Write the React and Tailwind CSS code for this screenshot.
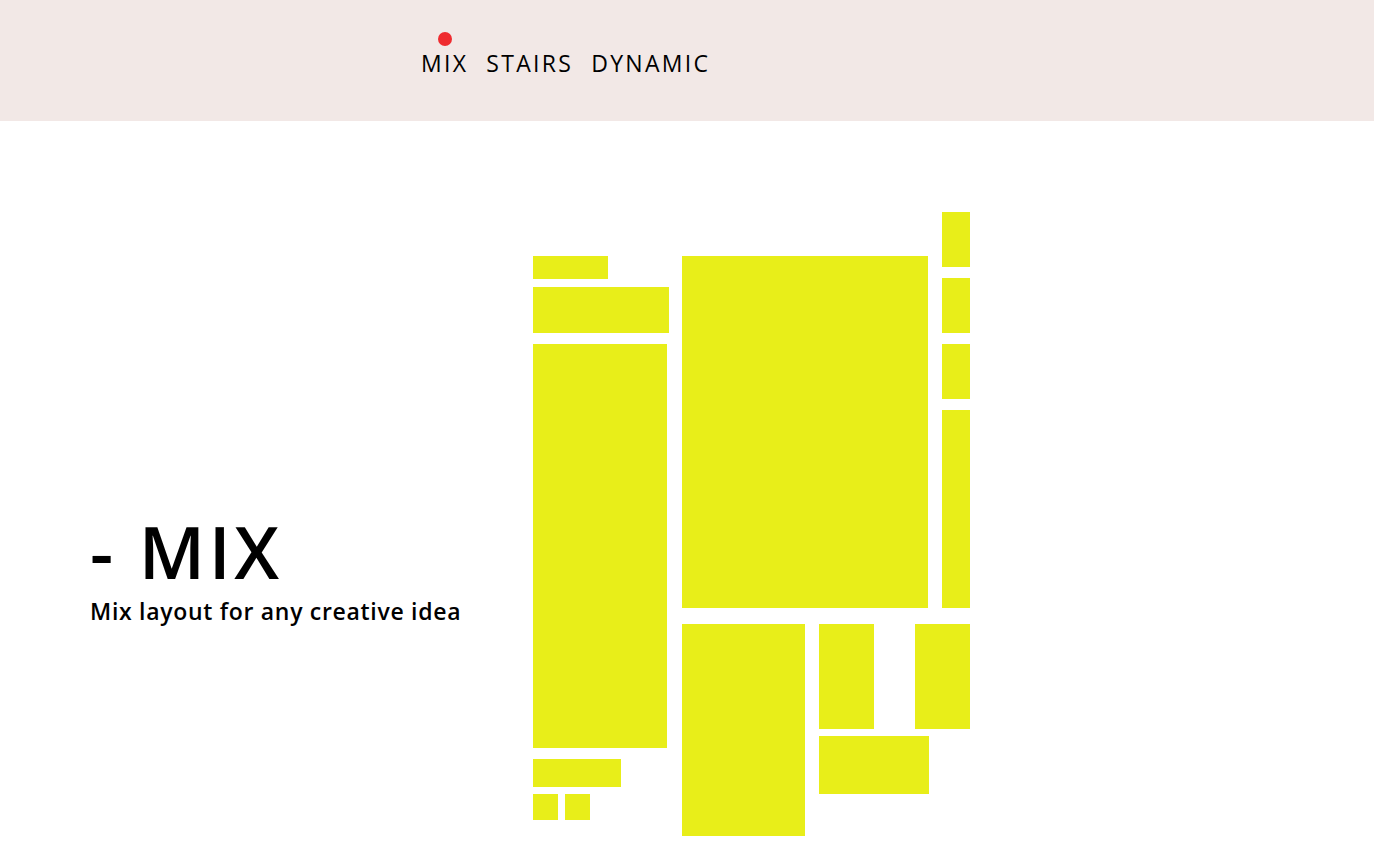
const Y = 'bg-[#e8ee19]';

const NavItem = ({ label, active }) => (
    <div className="relative">
        {active && (
            <span className="absolute left-1/2 -top-[20px] -translate-x-1/2 w-[14px] h-[14px] rounded-full bg-[#ef2b2f]" />
        )}
        <span className="text-[23px] font-normal tracking-[2.3px] text-black">{label}</span>
    </div>
);

export default function App() {
    return (
        <div className="min-h-screen bg-white" style={{ fontFamily: '"Open Sans", "Liberation Sans", sans-serif' }}>
            {/* Header */}
            <header className="h-[121px] bg-[#f2e8e6] flex items-start pl-[421px] pt-[52px]">
                <nav className="flex gap-[18px] leading-none">
                    <NavItem label="MIX" active />
                    <NavItem label="STAIRS" />
                    <NavItem label="DYNAMIC" />
                </nav>
            </header>

            <main className="flex">
                {/* Title */}
                <div className="w-[533px] pl-[90px] pt-[394px] shrink-0">
                    <h1 className="text-[72px] font-semibold leading-none tracking-[3.5px] text-black">- MIX</h1>
                    <p className="mt-[13px] text-[23px] font-semibold leading-none tracking-[0.7px] text-black">Mix layout for any creative idea</p>
                </div>

                {/* Mix grid */}
                <div className="flex gap-[13px] pt-[91px]">
                    <div className="flex flex-col mt-[44px]">
                        <div className={`w-[75px] h-[23px] ${Y}`} />
                        <div className={`w-[136px] h-[46px] mt-[8px] ${Y}`} />
                        <div className={`w-[134px] h-[404px] mt-[11px] ${Y}`} />
                        <div className={`w-[88px] h-[28px] mt-[11px] ${Y}`} />
                        <div className="flex gap-[7px] mt-[7px]">
                            <div className={`w-[25px] h-[26px] ${Y}`} />
                            <div className={`w-[25px] h-[26px] ${Y}`} />
                        </div>
                    </div>

                    <div className="flex flex-col gap-[16px]">
                        <div className="flex items-end gap-[14px]">
                            <div className={`w-[246px] h-[352px] ${Y}`} />
                            <div className="flex flex-col gap-[11px]">
                                <div className={`w-[28px] h-[55px] ${Y}`} />
                                <div className={`w-[28px] h-[55px] ${Y}`} />
                                <div className={`w-[28px] h-[55px] ${Y}`} />
                                <div className={`w-[28px] h-[198px] ${Y}`} />
                            </div>
                        </div>
                        <div className="flex gap-[14px]">
                            <div className={`w-[123px] h-[212px] ${Y}`} />
                            <div className="flex flex-col gap-[7px]">
                                <div className="flex gap-[41px]">
                                    <div className={`w-[55px] h-[105px] ${Y}`} />
                                    <div className={`w-[55px] h-[105px] ${Y}`} />
                                </div>
                                <div className={`w-[110px] h-[58px] ${Y}`} />
                            </div>
                        </div>
                    </div>
                </div>
            </main>
        </div>
    );
}
